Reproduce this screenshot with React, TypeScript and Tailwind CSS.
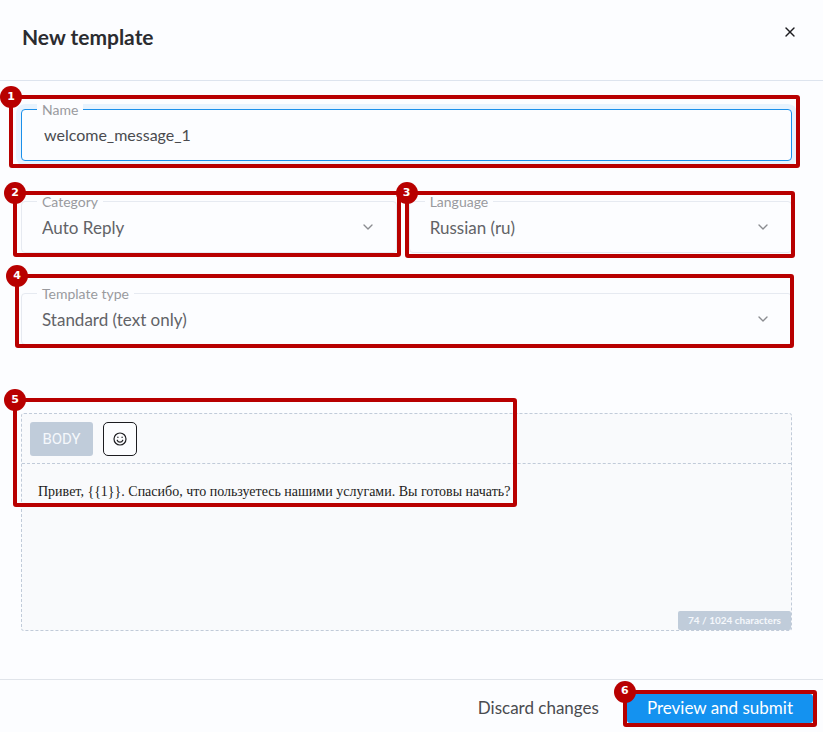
import { useState, type ReactNode } from "react";
import { ChevronDown, X } from "lucide-react";

const DEFAULT_BODY = "Привет, {{1}}. Спасибо, что пользуетесь нашими услугами. Вы готовы начать?";

/* Red guide frame with a numbered badge centred on its top left corner. */
function Callout({ step, className }: { step: number; className: string }) {
  return (
    <div className={"pointer-events-none absolute z-10 rounded-[3px] border-4 border-[#b80000] " + className}>
      <span className="absolute -top-[13px] -left-[13px] flex size-[22px] items-center justify-center rounded-full bg-[#b80000] font-['DejaVu_Sans',sans-serif] text-[11px] font-bold text-white">
        {step}
      </span>
    </div>
  );
}

function FieldLabel({ htmlFor, children }: { htmlFor: string; children: ReactNode }) {
  return (
    <label
      htmlFor={htmlFor}
      className="absolute -top-2 left-4 bg-[#fcfdff] px-[5px] text-sm leading-[18px] text-[#999a9e]"
    >
      {children}
    </label>
  );
}

function SelectField({ id, label, options, children }: { id: string; label: string; options: string[]; children: ReactNode }) {
  return (
    <div className="relative">
      <select
        id={id}
        className="block h-[52px] w-full appearance-none rounded border border-[#e6eaf1] bg-transparent pt-0.5 pr-12 pl-5 text-[17px] text-[#626367] outline-none"
      >
        {options.map((option) => (
          <option key={option}>{option}</option>
        ))}
      </select>
      <FieldLabel htmlFor={id}>{label}</FieldLabel>
      <ChevronDown
        size={16}
        strokeWidth={2}
        className="pointer-events-none absolute top-[18px] right-[21px] text-[#8b8c90]"
      />
      {children}
    </div>
  );
}

function SmileIcon() {
  return (
    <svg width="14" height="14" viewBox="0 0 14 14" fill="none" stroke="#1c1c20" strokeWidth="1.2" strokeLinecap="round">
      <circle cx="7" cy="7" r="6" />
      <path d="M4.2 8.200c.5 1.400 1.500 2 2.800 2s2.300-.6 2.800-2" />
      <path d="M4.900 5v.4M9.100 5v.4" />
    </svg>
  );
}

export default function App() {
  const [name, setName] = useState("welcome_message_1");
  const [body, setBody] = useState(DEFAULT_BODY);

  return (
    <div className="flex min-h-screen flex-col bg-[#fcfdff] font-[Lato,sans-serif] text-[#2b2c30]">
      <header className="flex h-[81px] items-start justify-between border-b border-[#dde4ee] pt-6 pr-[25px] pl-[22px]">
        <h1 className="text-[21px] leading-[26px] font-bold">New template</h1>
        <button type="button" aria-label="Close" className="text-[#1c1c20]">
          <X size={16} strokeWidth={2} />
        </button>
      </header>

      <main className="flex flex-1 flex-col gap-10 pt-7 pr-[31px] pb-12 pl-[21px]">
        <div className="relative">
          <input
            id="name"
            type="text"
            value={name}
            onChange={(e) => setName(e.target.value)}
            className="block h-[52px] w-full rounded border border-[#1b90ea] bg-[#fcfdff] px-[22px] pb-0.5 text-base text-[#4a4b4f] ring-5 ring-[#e7f3fe] outline-none"
          />
          <FieldLabel htmlFor="name">Name</FieldLabel>
          <Callout step={1} className="-top-3.5 -right-2 -bottom-[7px] -left-3" />
        </div>

        <div className="grid grid-cols-[49fr_50fr] gap-3">
          <SelectField id="category" label="Category" options={["Auto Reply"]}>
            <Callout step={2} className="-top-2.5 -right-1 -bottom-1 -left-2" />
          </SelectField>
          <SelectField id="language" label="Language" options={["Russian (ru)"]}>
            <Callout step={3} className="-top-2.5 -right-[3px] -bottom-[5px] -left-1" />
          </SelectField>
        </div>

        <SelectField id="type" label="Template type" options={["Standard (text only)"]}>
          <Callout step={4} className="-top-[19px] -right-0.5 -bottom-[3px] -left-1.5" />
        </SelectField>

        <section className="relative mt-7 flex flex-1 flex-col rounded-[3px] border border-dashed border-[#c1cbd9] bg-[#f9fafc]">
          <div className="flex gap-2.5 border-b border-dashed border-[#c1cbd9] p-2 pb-[7px]">
            <button
              type="button"
              className="h-[34px] w-[63px] rounded-[3px] bg-[#c0ccda] text-center font-[Roboto,sans-serif] text-[15px] text-[#f5f8fc]"
            >
              BODY
            </button>
            <button
              type="button"
              aria-label="Insert emoji"
              className="flex size-[34px] items-center justify-center rounded-[5px] border border-[#1c1c20] bg-[#fcfdff]"
            >
              <SmileIcon />
            </button>
          </div>
          <textarea
            aria-label="Body"
            rows={7}
            value={body}
            onChange={(e) => setBody(e.target.value)}
            className="block w-full flex-1 resize-none bg-transparent px-4 pt-[18px] font-['Liberation_Serif',serif] text-sm leading-5 text-[#1c1c20] outline-none"
          />
          <span className="absolute right-0 bottom-0 rounded-[2px] bg-[#c0ccda] px-2.5 text-[10px] leading-[19px] font-bold text-[#f5f8fc]">
            74 / 1024 characters
          </span>
          <Callout step={5} className="-top-4 -left-[9px] h-[109px] w-[504px]" />
        </section>
      </main>

      <footer className="flex h-[53px] items-center justify-end gap-2 border-t border-[#e0e4ea] pt-1 pr-2.5">
        <button type="button" className="h-[29px] px-5 text-[17px] text-[#4a4b4f]">
          Discard changes
        </button>
        <div className="relative">
          <button type="button" className="block h-[29px] rounded-[3px] bg-[#1492f0] px-5 text-[17px] text-white">
            Preview and submit
          </button>
          <Callout step={6} className="-top-1 -right-1 -bottom-1 -left-1" />
        </div>
      </footer>
    </div>
  );
}
